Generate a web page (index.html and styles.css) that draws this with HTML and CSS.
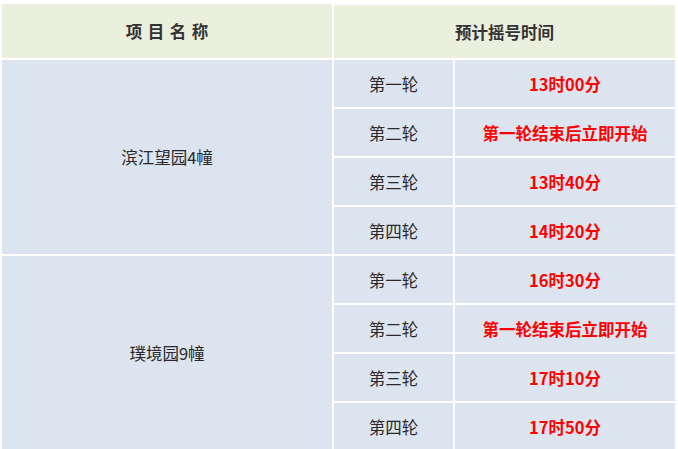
FILE: index.html
```html
<!DOCTYPE html>
<html lang="zh">
<head>
<meta charset="utf-8">
<link rel="stylesheet" href="styles.css">
</head>
<body>
<div class="wrap">
<table class="sched">
  <colgroup><col class="c1"><col class="c2"><col class="c3"></colgroup>
  <thead>
    <tr class="head">
      <th class="spaced">项目名称</th>
      <th colspan="2">预计摇号时间</th>
    </tr>
  </thead>
  <tbody>
    <tr><td rowspan="4" class="proj">滨江望园4幢</td><td>第一轮</td><td class="time">13时00分</td></tr>
    <tr><td>第二轮</td><td class="time">第一轮结束后立即开始</td></tr>
    <tr><td>第三轮</td><td class="time">13时40分</td></tr>
    <tr><td>第四轮</td><td class="time">14时20分</td></tr>
    <tr><td rowspan="4" class="proj">璞境园9幢</td><td>第一轮</td><td class="time">16时30分</td></tr>
    <tr><td>第二轮</td><td class="time">第一轮结束后立即开始</td></tr>
    <tr><td>第三轮</td><td class="time">17时10分</td></tr>
    <tr><td>第四轮</td><td class="time">17时50分</td></tr>
  </tbody>
</table>
</div>
</body>
</html>
```
FILE: styles.css
```css
html, body {
  margin: 0;
  padding: 0;
  background: #ffffff;
}
.wrap {
  padding: 3px 3px 0 2px;
}
.sched {
  width: 673px;
  border-collapse: collapse;
  table-layout: fixed;
  font-family: "Microsoft YaHei", "Noto Sans CJK SC", sans-serif;
  font-size: 16.5px;
  color: #2a2a2a;
}
.c1 { width: 331px; }
.c2 { width: 121px; }
.c3 { width: 221px; }
.sched th, .sched td {
  border: 2px solid #ffffff;
  text-align: center;
  vertical-align: middle;
  padding: 0;
}
.sched tr.head th {
  background: #ebefde;
  height: 53px;
  font-weight: bold;
  color: #333333;
}
.sched tr.head th:first-child,
.sched tbody tr:first-child td {
  border-top: 0;
}
.sched th:first-child, .sched td.proj {
  border-left: 0;
}
.sched th:last-child, .sched td:last-child {
  border-right: 0;
}
.spaced {
  letter-spacing: 5.5px;
  text-indent: 5.5px;
}
.sched td {
  background: #dce4f0;
  height: 47px;
}
.sched td.time {
  color: #ff0000;
  font-weight: bold;
}
```
